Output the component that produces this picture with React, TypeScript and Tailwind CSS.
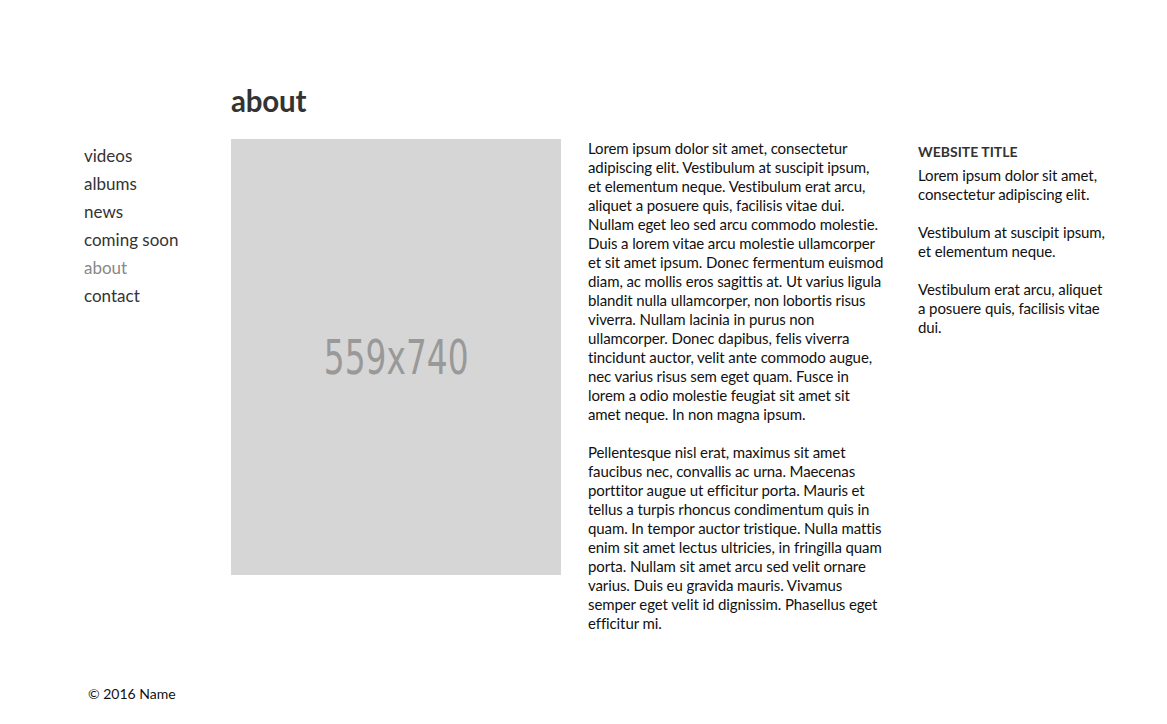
const p1 = [
  "Lorem ipsum dolor sit amet, consectetur",
  "adipiscing elit. Vestibulum at suscipit ipsum,",
  "et elementum neque. Vestibulum erat arcu,",
  "aliquet a posuere quis, facilisis vitae dui.",
  "Nullam eget leo sed arcu commodo molestie.",
  "Duis a lorem vitae arcu molestie ullamcorper",
  "et sit amet ipsum. Donec fermentum euismod",
  "diam, ac mollis eros sagittis at. Ut varius ligula",
  "blandit nulla ullamcorper, non lobortis risus",
  "viverra. Nullam lacinia in purus non",
  "ullamcorper. Donec dapibus, felis viverra",
  "tincidunt auctor, velit ante commodo augue,",
  "nec varius risus sem eget quam. Fusce in",
  "lorem a odio molestie feugiat sit amet sit",
  "amet neque. In non magna ipsum.",
];
const p2 = [
  "Pellentesque nisl erat, maximus sit amet",
  "faucibus nec, convallis ac urna. Maecenas",
  "porttitor augue ut efficitur porta. Mauris et",
  "tellus a turpis rhoncus condimentum quis in",
  "quam. In tempor auctor tristique. Nulla mattis",
  "enim sit amet lectus ultricies, in fringilla quam",
  "porta. Nullam sit amet arcu sed velit ornare",
  "varius. Duis eu gravida mauris. Vivamus",
  "semper eget velit id dignissim. Phasellus eget",
  "efficitur mi.",
];
const side = [
  ["Lorem ipsum dolor sit amet,", "consectetur adipiscing elit."],
  ["Vestibulum at suscipit ipsum,", "et elementum neque."],
  ["Vestibulum erat arcu, aliquet", "a posuere quis, facilisis vitae", "dui."],
];

function Lines({ lines }: { lines: string[] }) {
  return (
    <p>
      {lines.map((l, i) => (
        <span key={i} className="block whitespace-nowrap">
          {l}
        </span>
      ))}
    </p>
  );
}

export default function App() {
  const nav = ["videos", "albums", "news", "coming soon", "about", "contact"];
  return (
    <div className="min-h-[724px] w-[1167px] bg-white font-['Lato','Noto_Sans',sans-serif] text-[#111]">
      <div className="flex pl-[84px] pt-[84px]">
        <nav className="w-[147px] pt-[61px] flex flex-col">
          {nav.map((n) => (
            <a
              key={n}
              className={`block h-[28px] text-[17px] leading-[22px] ${n === "about" ? "text-[#888]" : "text-[#333]"}`}
            >
              {n}
            </a>
          ))}
        </nav>
        <main className="flex flex-col">
          <h1 className="h-[55px] text-[29.5px] font-bold leading-[34px] text-[#333] tracking-[-0.2px]">about</h1>
          <div className="flex">
            <div className="flex h-[436px] w-[330px] items-center justify-center bg-[#d6d6d6]">
              <span className="font-['Liberation_Sans_Narrow','DejaVu_Sans_Condensed',sans-serif] text-[48px] text-[#999] scale-x-[0.76]">
                559x740
              </span>
            </div>
            <div className="ml-[27px] w-[303px] text-[15px] leading-[19px] flex flex-col gap-[19px] tracking-[-0.1px]">
              <Lines lines={p1} />
              <Lines lines={p2} />
            </div>
            <aside className="ml-[27px] w-[200px] pt-[4px] text-[15px] leading-[19px] tracking-[-0.1px]">
              <h2 className="font-bold uppercase text-[14px] text-[#333] leading-[18px] mb-[5px] tracking-[0px]">Website Title</h2>
              <div className="flex flex-col gap-[19px]">
                {side.map((s, i) => (
                  <Lines key={i} lines={s} />
                ))}
              </div>
            </aside>
          </div>
        </main>
      </div>
      <footer className="pl-[88px] pt-[51px] text-[14px] leading-[19px]">© 2016 Name</footer>
    </div>
  );
}
